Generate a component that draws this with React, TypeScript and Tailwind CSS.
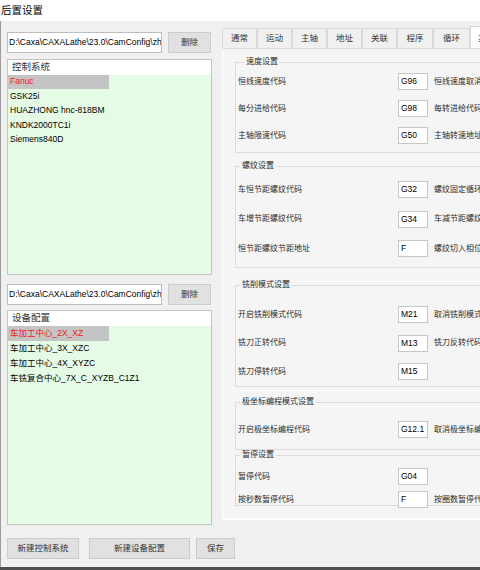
import type { ReactNode } from "react";

const font = "font-['Liberation_Sans','Noto_Sans_CJK_SC',sans-serif]";

const tabs = [
  { label: "通常", w: "w-[35px]" },
  { label: "运动", w: "w-[35px]" },
  { label: "主轴", w: "w-[35px]" },
  { label: "地址", w: "w-[35px]" },
  { label: "关联", w: "w-[35px]" },
  { label: "程序", w: "w-[36px]" },
  { label: "循环", w: "w-[37px]" },
];

const controllers = ["Fanuc", "GSK25i", "HUAZHONG hnc-818BM", "KNDK2000TC1i", "Siemens840D"];
const machines = ["车加工中心_2X_XZ", "车加工中心_3X_XZC", "车加工中心_4X_XYZC", "车铣复合中心_7X_C_XYZB_C1Z1"];

type Row = { label: string; code: string; extra?: string };

function CodeRow({ label, code, extra }: Row) {
  return (
    <div className="flex h-[17px] items-center">
      <span className="w-[160px] shrink-0 text-[8px] text-[#2b2b2b]">{label}</span>
      <div className="flex h-[17px] w-[30px] shrink-0 items-center border border-[#c6c6c6] bg-white pl-[2px] text-[8.5px] text-black">
        {code}
      </div>
      {extra && <span className="ml-[6px] whitespace-nowrap text-[8px] text-[#2b2b2b]">{extra}</span>}
    </div>
  );
}

function Group({ title, className, legendClass, children }: { title: string; className: string; legendClass: string; children: ReactNode }) {
  return (
    <fieldset className={`ml-[12px] w-[320px] shrink-0 border border-[#dcdcdc] pl-[2px] ${className}`}>
      <legend className={`px-[2px] text-[8px] leading-[10px] text-[#2b2b2b] ${legendClass}`}>{title}</legend>
      {children}
    </fieldset>
  );
}

function PathRow() {
  return (
    <div className="flex h-[21px]">
      <div className="flex w-[155px] items-center overflow-hidden whitespace-nowrap border border-[#bdbdbd] bg-white pl-[1px] text-[8.5px] text-black">
        D:\Caxa\CAXALathe\23.0\CamConfig\zh
      </div>
      <button className="ml-[6px] w-[43px] border border-[#cccccc] bg-[#e1e1e1] text-[8.5px] text-[#333]">删除</button>
    </div>
  );
}

function ListBox({ title, items, rowClass }: { title: string; items: string[]; rowClass: string }) {
  return (
    <div className="flex h-full flex-col border border-[#c3c3c3] bg-[#e6fbe6]">
      <div className={`flex items-center bg-white pl-[4px] text-[9.5px] text-[#333] ${rowClass}`}>{title}</div>
      {items.map((item, i) => (
        <div key={item} className={`flex items-center ${rowClass}`}>
          <span
            className={`flex h-full items-center whitespace-nowrap pl-[2px] text-[8.5px] ${
              i === 0 ? "w-[101px] bg-[#c4c4c4] text-[#ee1c1c]" : "text-black"
            }`}
          >
            {item}
          </span>
        </div>
      ))}
    </div>
  );
}

export default function App() {
  return (
    <div className={`flex h-[570px] w-[480px] flex-col overflow-hidden bg-[#f0f0f0] ${font}`}>
      {/* title bar */}
      <div className="flex h-[21px] shrink-0 items-center bg-white pl-[1px] text-[10.5px] text-black">后置设置</div>

      <div className="flex flex-1 flex-col border-l border-[#9c9c9c]">
        <div className="flex h-[504px] shrink-0">
          {/* left: controllers and machines */}
          <div className="flex w-[221px] shrink-0 flex-col pl-[6px]">
            <div className="mt-[11px]">
              <PathRow />
            </div>
            <div className="mt-[6px] h-[216px] w-[205px]">
              <ListBox title="控制系统" items={controllers} rowClass="h-[14.5px]" />
            </div>
            <div className="mt-[9px]">
              <PathRow />
            </div>
            <div className="mt-[5px] h-[215px] w-[205px]">
              <ListBox title="设备配置" items={machines} rowClass="h-[15px]" />
            </div>
          </div>

          {/* right: tabbed code settings */}
          <div className="flex w-[300px] shrink-0 flex-col">
            <div className="mt-[5px] flex h-[22px] items-end">
              {tabs.map((t) => (
                <div
                  key={t.label}
                  className={`flex h-[20px] ${t.w} items-center justify-center border border-b-0 border-[#dadada] bg-[#f0f0f0] text-[8.5px] text-[#333]`}
                >
                  {t.label}
                </div>
              ))}
              <div className="-mb-px flex h-[23px] w-[40px] items-center justify-start border border-b-0 border-[#d6d6d6] bg-white pl-[7px] text-[8.5px] text-[#333]">
                其它
              </div>
            </div>
            <div className="flex h-[472px] flex-col border-b-2 border-l border-t border-white border-t-[#dadada] bg-[#f5f5f5] pt-[8px]">
              <Group title="速度设置" className="" legendClass="ml-[6px]">
                <div className="mt-[6px] flex flex-col gap-[10px] pb-[8px]">
                  <CodeRow label="恒线速度代码" code="G96" extra="恒线速度取消代码" />
                  <CodeRow label="每分进给代码" code="G98" extra="每转进给代码" />
                  <CodeRow label="主轴限速代码" code="G50" extra="主轴转速地址" />
                </div>
              </Group>

              <Group title="螺纹设置" className="mt-[8px]" legendClass="ml-[2px]">
                <div className="mt-[10px] flex flex-col gap-[12.5px] pb-[10px]">
                  <CodeRow label="车恒节距螺纹代码" code="G32" extra="螺纹固定循环代码" />
                  <CodeRow label="车增节距螺纹代码" code="G34" extra="车减节距螺纹代码" />
                  <CodeRow label="恒节距螺纹节距地址" code="F" extra="螺纹切入相位角" />
                </div>
              </Group>

              <Group title="铣削模式设置" className="mt-[12px]" legendClass="ml-[2px]">
                <div className="mt-[16px] flex flex-col gap-[11.5px] pb-[6px]">
                  <CodeRow label="开启铣削模式代码" code="M21" extra="取消铣削模式代码" />
                  <CodeRow label="铣刀正转代码" code="M13" extra="铣刀反转代码" />
                  <CodeRow label="铣刀停转代码" code="M15" />
                </div>
              </Group>

              <Group title="极坐标编程模式设置" className="mt-[10px]" legendClass="ml-[2px]">
                <div className="mt-[14px] flex flex-col pb-[11px]">
                  <CodeRow label="开启极坐标编程代码" code="G12.1" extra="取消极坐标编程代码" />
                </div>
              </Group>

              <Group title="暂停设置" className="" legendClass="ml-[2px]">
                <div className="-mb-[3px] mt-[8px] flex flex-col gap-[6px]">
                  <CodeRow label="暂停代码" code="G04" />
                  <CodeRow label="按秒数暂停代码" code="F" extra="按圈数暂停代码" />
                </div>
              </Group>
            </div>
          </div>
        </div>

        {/* bottom actions */}
        <div className="mt-[13px] flex h-[21px] pl-[6px] text-[8.5px] text-[#333]">
          <button className="w-[72px] border border-[#cccccc] bg-[#e1e1e1]">新建控制系统</button>
          <button className="ml-[10px] w-[101px] border border-[#cccccc] bg-[#e1e1e1]">新建设备配置</button>
          <button className="ml-[6px] w-[39px] border border-[#cccccc] bg-[#e1e1e1]">保存</button>
        </div>
      </div>

      <div className="h-[3px] shrink-0 bg-[#505050]" />
    </div>
  );
}
